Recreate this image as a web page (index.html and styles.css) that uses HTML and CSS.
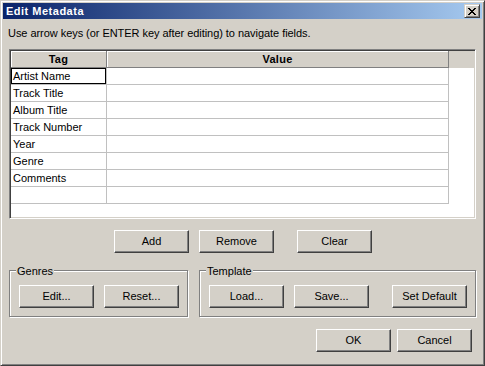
FILE: index.html
```html
<!DOCTYPE html>
<html>
<head>
<meta charset="utf-8">
<title>Edit Metadata</title>
<link rel="stylesheet" href="styles.css">
</head>
<body>
<div class="window">
  <div class="titlebar">
    <span class="title">Edit Metadata</span>
    <button class="close" aria-label="Close"><svg width="8" height="7" viewBox="0 0 8 7" shape-rendering="crispEdges"><path d="M0 0h2v1H0zM6 0h2v1H6zM1 1h2v1H1zM5 1h2v1H5zM2 2h4v1H2zM3 3h2v1H3zM2 4h4v1H2zM1 5h2v1H1zM5 5h2v1H5zM0 6h2v1H0zM6 6h2v1H6z" fill="#000"/></svg></button>
  </div>
  <div class="content">
    <div class="hint">Use arrow keys (or ENTER key after editing) to navigate fields.</div>
    <div class="grid">
      <div class="thead">
        <div class="th th-tag">Tag</div>
        <div class="th th-value">Value</div>
      </div>
      <div class="row"><div class="cell tag focus">Artist Name</div><div class="cell value"></div></div>
      <div class="row"><div class="cell tag">Track Title</div><div class="cell value"></div></div>
      <div class="row"><div class="cell tag">Album Title</div><div class="cell value"></div></div>
      <div class="row"><div class="cell tag">Track Number</div><div class="cell value"></div></div>
      <div class="row"><div class="cell tag">Year</div><div class="cell value"></div></div>
      <div class="row"><div class="cell tag">Genre</div><div class="cell value"></div></div>
      <div class="row"><div class="cell tag">Comments</div><div class="cell value"></div></div>
      <div class="row"><div class="cell tag"></div><div class="cell value"></div></div>
    </div>
    <div class="actions">
      <button class="btn">Add</button>
      <button class="btn">Remove</button>
      <button class="btn wide-gap">Clear</button>
    </div>
    <div class="groups">
      <div class="group genres">
        <span class="legend">Genres</span>
        <button class="btn">Edit...</button>
        <button class="btn">Reset...</button>
      </div>
      <div class="group template">
        <span class="legend">Template</span>
        <button class="btn">Load...</button>
        <button class="btn">Save...</button>
        <button class="btn wide-gap">Set Default</button>
      </div>
    </div>
    <div class="footer">
      <button class="btn">OK</button>
      <button class="btn">Cancel</button>
    </div>
  </div>
</div>
</body>
</html>
```

FILE: styles.css
```css
html, body {
  margin: 0;
  padding: 0;
  background: #d4d0c8;
}

body {
  font-family: "Liberation Sans", Arial, sans-serif;
  font-size: 11px;
  color: #000;
}

.window {
  width: 485px;
  height: 366px;
  box-sizing: border-box;
  border: 1px solid;
  border-color: #d4d0c8 #404040 #404040 #d4d0c8;
  box-shadow: inset 1px 1px 0 #fff, inset -1px -1px 0 #808080;
  padding: 2px;
  background: #d4d0c8;
  display: flex;
  flex-direction: column;
}

.titlebar {
  height: 16px;
  display: flex;
  align-items: center;
  justify-content: space-between;
  background: linear-gradient(to right, #0a246a, #a6caf0);
  padding: 0 2px 0 3px;
}

.title {
  color: #fff;
  font-weight: bold;
  font-size: 11px;
  line-height: 13px;
  letter-spacing: 0.5px;
}

.close {
  width: 16px;
  height: 14px;
  box-sizing: border-box;
  padding: 0;
  margin: 0;
  border: 1px solid;
  border-color: #d4d0c8 #404040 #404040 #d4d0c8;
  box-shadow: inset 1px 1px 0 #fff, inset -1px -1px 0 #808080;
  background: #d4d0c8;
  display: flex;
  align-items: center;
  justify-content: center;
}

.close svg {
  display: block;
}

.content {
  display: flex;
  flex-direction: column;
  padding: 0 5px 0 6px;
}

.hint {
  margin-top: 8px;
  margin-left: -1px;
  line-height: 13px;
  white-space: nowrap;
  letter-spacing: -0.05px;
}

.grid {
  width: 467px;
  height: 170px;
  box-sizing: border-box;
  margin-top: 9px;
  border: 1px solid;
  border-color: #808080 #fff #fff #808080;
  box-shadow: inset 1px 1px 0 #404040, inset -1px -1px 0 #d4d0c8;
  padding: 1px;
  background: #fff;
}

.thead {
  display: flex;
  height: 17px;
  background: #d4d0c8;
}

.th {
  box-sizing: border-box;
  height: 17px;
  border-right: 1px solid #808080;
  border-bottom: 1px solid #808080;
  box-shadow: inset 1px 1px 0 #fff;
  font-weight: bold;
  text-align: center;
  padding-top: 1px;
  line-height: 15px;
  letter-spacing: 0.3px;
}

.th-tag { width: 96px; }
.th-value { width: 342px; }

.row {
  display: flex;
}

.cell {
  box-sizing: border-box;
  height: 17px;
  border-right: 1px solid #c0c0c0;
  border-bottom: 1px solid #c0c0c0;
  line-height: 16px;
  white-space: nowrap;
  overflow: hidden;
}

.tag {
  width: 96px;
  padding-left: 2px;
}

.value {
  width: 342px;
}

.focus {
  box-shadow: inset 0 0 0 1px #000;
}

.btn {
  width: 75px;
  height: 23px;
  box-sizing: border-box;
  margin: 0;
  padding: 0;
  border: 1px solid;
  border-color: #fff #404040 #404040 #fff;
  box-shadow: inset -1px -1px 0 #808080;
  background: #d4d0c8;
  font-family: inherit;
  font-size: 11px;
  color: #000;
  line-height: 13px;
}

.actions {
  display: flex;
  gap: 10px;
  margin-top: 11px;
  padding-left: 105px;
}

.wide-gap {
  margin-left: 13px;
}

.groups {
  display: flex;
  margin-top: 17px;
}

.group {
  position: relative;
  box-sizing: border-box;
  height: 47px;
  border: 1px solid #808080;
  box-shadow: 1px 1px 0 #fff, inset 1px 1px 0 #fff;
  padding: 14px 0 0 9px;
  display: flex;
  align-items: flex-start;
  gap: 10px;
}

.genres {
  width: 179px;
}

.template {
  width: 277px;
  margin-left: 11px;
}

.legend {
  position: absolute;
  left: 6px;
  top: -6px;
  padding: 0 1px;
  background: #d4d0c8;
  line-height: 13px;
}

.footer {
  display: flex;
  gap: 6px;
  margin-top: 12px;
  padding-left: 307px;
}
```
